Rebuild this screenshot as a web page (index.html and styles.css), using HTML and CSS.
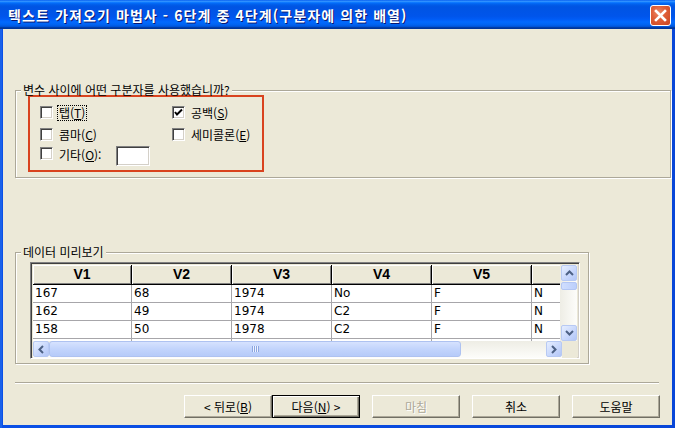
FILE: index.html
```html
<!DOCTYPE html>
<html lang="ko">
<head>
<meta charset="utf-8">
<title>텍스트 가져오기 마법사</title>
<link rel="stylesheet" href="styles.css">
</head>
<body>
<div class="window">
  <div class="titlebar">
    <span class="title">텍스트 가져오기 마법사 - 6단계 중 4단계(구분자에 의한 배열)</span>
    <div class="close">
      <svg width="13" height="13" viewBox="0 0 13 13"><path d="M2 2 L11 11 M11 2 L2 11" stroke="#fff" stroke-width="2.6" stroke-linecap="square"/></svg>
    </div>
  </div>
  <div class="client">
    <div class="group g1">
      <div class="legend">변수 사이에 어떤 구분자를 사용했습니까?</div>
      <div class="redbox">
        <div class="opts">
          <div class="opt r1"><span class="cb"></span><span class="lbl focus">탭(<u>T</u>)</span></div>
          <div class="opt r1"><span class="cb"><svg width="11" height="11" viewBox="0 0 11 11"><path d="M2 5 L4 7.5 L9 2.5" stroke="#000" stroke-width="2" fill="none"/></svg></span><span class="lbl">공백(<u>S</u>)</span></div>
          <div class="opt r2"><span class="cb"></span><span class="lbl">콤마(<u>C</u>)</span></div>
          <div class="opt r2"><span class="cb"></span><span class="lbl">세미콜론(<u>E</u>)</span></div>
          <div class="opt r3"><span class="cb"></span><span class="lbl">기타(<u>O</u>):</span><span class="tb"></span></div>
        </div>
      </div>
    </div>

    <div class="group g2">
      <div class="legend">데이터 미리보기</div>
      <div class="grid">
        <div class="gridtop">
          <div class="cells">
            <div class="row head">
              <div class="c w1">V1</div><div class="c">V2</div><div class="c">V3</div><div class="c">V4</div><div class="c">V5</div><div class="c wl"></div>
            </div>
            <div class="row">
              <div class="c w1">167</div><div class="c">68</div><div class="c">1974</div><div class="c">No</div><div class="c">F</div><div class="c wl">N</div>
            </div>
            <div class="row">
              <div class="c w1">162</div><div class="c">49</div><div class="c">1974</div><div class="c">C2</div><div class="c">F</div><div class="c wl">N</div>
            </div>
            <div class="row">
              <div class="c w1">158</div><div class="c">50</div><div class="c">1978</div><div class="c">C2</div><div class="c">F</div><div class="c wl">N</div>
            </div>
            <div class="row part">
              <div class="c w1"></div><div class="c"></div><div class="c"></div><div class="c"></div><div class="c"></div><div class="c wl"></div>
            </div>
          </div>
          <div class="vscroll">
            <div class="sbtn"><svg width="9" height="6" viewBox="0 0 9 6"><path d="M1 5 L4.5 1.5 L8 5" stroke="#4d6185" stroke-width="2" fill="none"/></svg></div>
            <div class="vthumb"></div>
            <div class="vtrack"></div>
            <div class="sbtn"><svg width="9" height="6" viewBox="0 0 9 6"><path d="M1 1 L4.5 4.5 L8 1" stroke="#4d6185" stroke-width="2" fill="none"/></svg></div>
          </div>
        </div>
        <div class="gridbottom">
          <div class="hscroll">
            <div class="sbtn"><svg width="6" height="9" viewBox="0 0 6 9"><path d="M5 1 L1.5 4.5 L5 8" stroke="#4d6185" stroke-width="2" fill="none"/></svg></div>
            <div class="hthumb"><span class="grip"></span></div>
            <div class="htrack"></div>
            <div class="sbtn"><svg width="6" height="9" viewBox="0 0 6 9"><path d="M1 1 L4.5 4.5 L1 8" stroke="#4d6185" stroke-width="2" fill="none"/></svg></div>
          </div>
          <div class="corner"></div>
        </div>
      </div>
    </div>

    <div class="sep"></div>

    <div class="buttons">
      <div class="btn">&lt; 뒤로(<u>B</u>)</div>
      <div class="btn def">다음(<u>N</u>) &gt;</div>
      <div class="btn dis gap">마침</div>
      <div class="btn gap">취소</div>
      <div class="btn gap">도움말</div>
    </div>
  </div>
</div>
</body>
</html>
```
FILE: styles.css
```css
* { box-sizing: border-box; }
html, body { margin: 0; padding: 0; background: #0846d8; }
body { font-family: "Noto Sans CJK KR", "Noto Sans", sans-serif; font-size: 12px; color: #000; }

.window {
  width: 675px; height: 428px;
  background: linear-gradient(to right, #0a4fe0 0, #2a73f0 1px, #0a50e6 2px, #0846d8 100%);
  display: flex; flex-direction: column;
}
.titlebar {
  height: 29px; flex: none;
  display: flex; align-items: center; justify-content: space-between;
  padding: 0 4px 0 8px;
  background: linear-gradient(to bottom, #0058ee 0%, #3593ff 4%, #288eff 6%, #127dff 8%, #036ffc 10%, #0262ee 14%, #0057e5 20%, #0054e3 24%, #0055eb 56%, #005bf5 66%, #026afe 76%, #0062ef 86%, #0052d6 92%, #0040ab 94%, #003092 100%);
}
.title {
  color: #fff; font-weight: bold; font-size: 14px; letter-spacing: 1.1px;
  text-shadow: 1px 1px 0 #0a1872;
  white-space: nowrap; margin-top: 1px;
}
.close {
  width: 21px; height: 21px; margin-top: 1px;
  border: 1px solid #fff; border-radius: 3px;
  background: radial-gradient(circle at 40% 35%, #ec8a6a 0%, #e0603a 40%, #c8431f 100%);
  display: flex; align-items: center; justify-content: center;
}
.client {
  flex: 1; margin: 0 3px 3px 3px;
  background: #ece9d8;
  padding: 61px 0 0 12px;
  display: flex; flex-direction: column;
}

/* group boxes */
.group {
  border: 1px solid #aca899;
  box-shadow: inset 1px 1px 0 #fff, 1px 1px 0 #fff;
}
.legend {
  margin: -8px 0 0 5px; padding: 0 2px;
  line-height: 14px; height: 14px;
  background: #ece9d8; width: max-content;
}
.g1 { width: 656px; height: 88px; }
.g2 { width: 574px; height: 112px; margin-top: 74px; }

.redbox {
  margin: -2px 0 0 12px;
  width: 236px; height: 77px;
  border: 2px solid #d9431f;
  padding: 7px 0 0 10px;
}
.opts {
  display: grid;
  grid-template-columns: 132px 90px;
  grid-template-rows: 17px 17px 20px;
  row-gap: 5px;
}
.opts .r3 { margin-top: -2px; }
.opt { display: flex; align-items: center; white-space: nowrap; line-height: 14px; }
.r3 { align-items: flex-start; grid-column: 1 / span 2; }
.r3 .cb { margin-top: 1px; }
.r3 .lbl { margin-top: 2px; }
.cb {
  width: 13px; height: 13px; flex: none;
  background: #fff;
  border: 1px solid; border-color: #808080 #fff #fff #808080;
  box-shadow: inset 1px 1px 0 #404040, inset -1px -1px 0 #d4d0c8;
  display: flex; align-items: center; justify-content: center;
  margin-right: 5px;
}
.lbl { padding: 0 1px; }
.focus { outline: 1px dotted #000; outline-offset: 0; }
.tb {
  width: 34px; height: 20px; margin-left: 14px;
  background: #fff;
  border: 1px solid; border-color: #808080 #fff #fff #808080;
  box-shadow: inset 1px 1px 0 #404040, inset -1px -1px 0 #d4d0c8;
}

/* grid */
.grid {
  margin: 3px 0 0 14px;
  width: 550px; height: 97px;
  border: 1px solid; border-color: #808080 #fff #fff #808080;
  box-shadow: inset 1px 1px 0 #404040, inset -1px -1px 0 #d4d0c8;
  padding: 2px;
  display: flex; flex-direction: column;
}
.gridtop { display: flex; height: 76px; }
.cells { width: 529px; background: #fff; overflow: hidden; }
.row { display: flex; height: 18px; }
.row .c {
  width: 100px; flex: none;
  border-right: 1px solid #a7a6aa; border-bottom: 1px solid #a7a6aa;
  font-family: "DejaVu Sans", sans-serif; font-size: 12px;
  padding-left: 2px; line-height: 17px;
}
.row .c.w1 { width: 99px; }
.row .c.wl { width: 30px; }
.row.head { height: 20px; }
.row.head .c {
  background: #ece9d8;
  border-right: 1px solid #000; border-bottom: 1px solid #000;
  box-shadow: inset 1px 1px 0 #fff, inset -1px -1px 0 #808080;
  font-family: "Liberation Sans", sans-serif; font-weight: bold; font-size: 14px;
  text-align: center; line-height: 19px; padding: 0;
}
.row.part { height: 3px; }
.row.part .c { border-bottom: none; }

.vscroll {
  width: 17px; height: 76px;
  background: linear-gradient(to right, #eeede5, #fdfdfa);
  display: flex; flex-direction: column; padding: 0 0 0 1px;
}
.sbtn {
  width: 16px; height: 16px; flex: none;
  border: 1px solid #b7c9f3; border-radius: 2px;
  background: linear-gradient(135deg, #e6eeff 0%, #c6d6fc 60%, #b3c6f6 100%);
  display: flex; align-items: center; justify-content: center;
}
.vthumb {
  height: 8px; margin-top: 1px; flex: none;
  border: 1px solid #b3c6f3; border-radius: 2px;
  background: linear-gradient(to right, #d0defe, #bccffb);
}
.vtrack { flex: 1; }
.gridbottom { display: flex; height: 17px; }
.hscroll {
  width: 529px; height: 17px;
  display: flex;
  background: linear-gradient(to bottom, #eeede5, #fdfdfa);
}
.hthumb {
  width: 412px; height: 16px; flex: none;
  border: 1px solid #aec2f1; border-radius: 3px;
  background: linear-gradient(to bottom, #d6e2fe 0%, #c2d4fc 50%, #b6cbf9 100%);
  display: flex; align-items: center; justify-content: center;
}
.grip {
  width: 7px; height: 6px;
  background: repeating-linear-gradient(to right, #8ca6e0 0 1px, #eef3ff 1px 2px);
}
.htrack { flex: 1; }
.corner { flex: 1; background: #ece9d8; }

.sep {
  width: 644px; height: 2px; margin-top: 18px;
  border-top: 1px solid #aca899; border-bottom: 1px solid #fff;
}

.buttons { display: flex; margin: 11px 0 0 169px; }
.btn {
  width: 88px; height: 23px;
  background: #ece9d8;
  border: 1px solid; border-color: #fff #716f64 #716f64 #fff;
  box-shadow: inset -1px -1px 0 #aca899;
  display: flex; align-items: center; justify-content: center;
  font-size: 12px; white-space: nowrap;
}
.btn.def {
  border: 1px solid #000;
  box-shadow: inset 1px 1px 0 #fff, inset -1px -1px 0 #716f64, inset -2px -2px 0 #aca899;
}
.btn.gap { margin-left: 12px; }
.btn.dis { color: #aca899; text-shadow: 1px 1px 0 #fff; }
```
